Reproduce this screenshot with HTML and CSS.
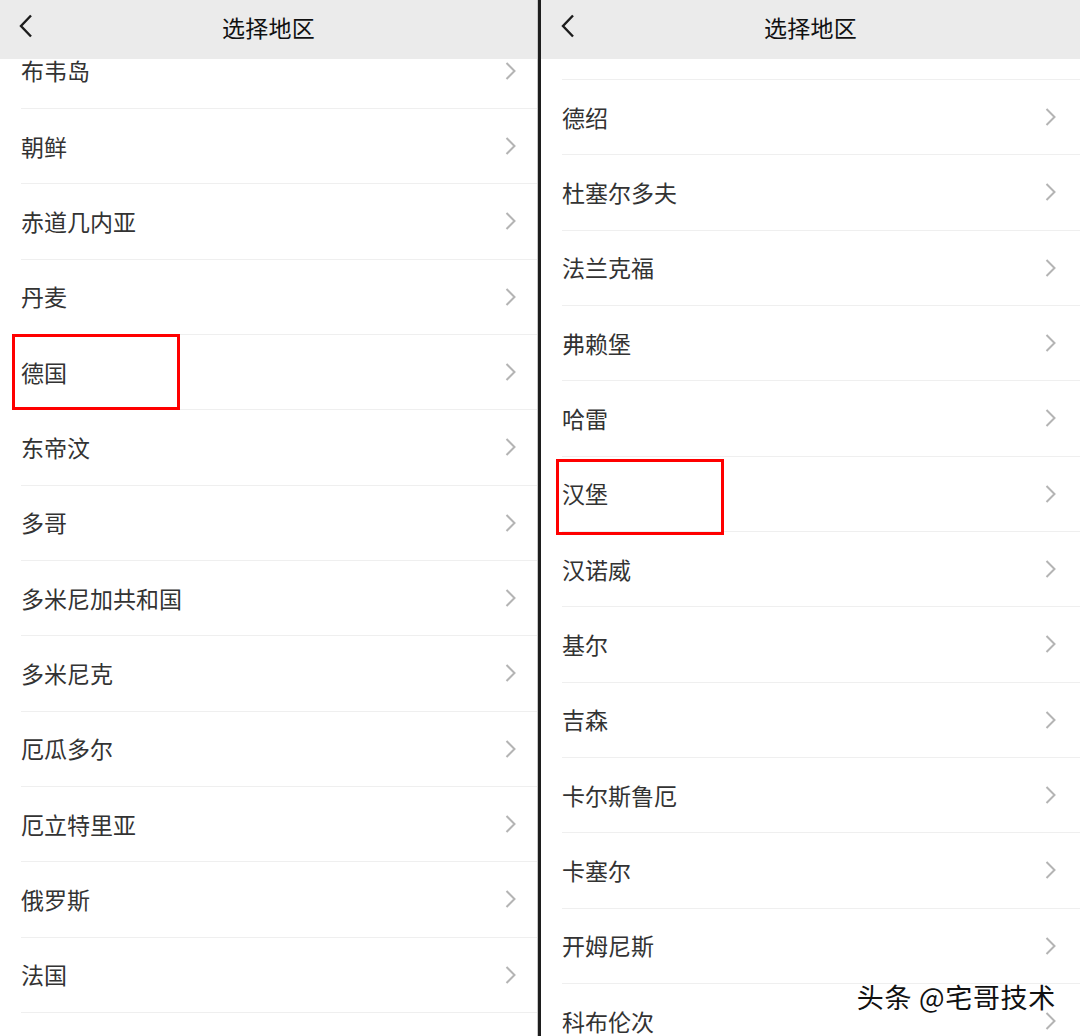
FILE: index.html
```html
<!DOCTYPE html>
<html>
<head>
    <meta charset="utf-8">
    <title>选择地区</title>
    <link rel="stylesheet" href="styles.css">
</head>
<body>
    <div class="screens">
        <div class="panel panel-left">
            <div class="header">
                <svg class="back" width="14" height="24" viewBox="0 0 14 24"><path d="M12 1.5 L2 12 L12 22.5" fill="none" stroke="#1c1c1c" stroke-width="2.4"/></svg>
                <span class="title">选择地区</span>
            </div>
            <div class="scroll">
                <ul class="list list-left">
                    <li class="row"><span>布韦岛</span><svg class="chev" viewBox="0 0 11 18"><path d="M1.5 1 L9.5 9 L1.5 17"/></svg></li>
                    <li class="row"><span>朝鲜</span><svg class="chev" viewBox="0 0 11 18"><path d="M1.5 1 L9.5 9 L1.5 17"/></svg></li>
                    <li class="row"><span>赤道几内亚</span><svg class="chev" viewBox="0 0 11 18"><path d="M1.5 1 L9.5 9 L1.5 17"/></svg></li>
                    <li class="row"><span>丹麦</span><svg class="chev" viewBox="0 0 11 18"><path d="M1.5 1 L9.5 9 L1.5 17"/></svg></li>
                    <li class="row"><span>德国</span><svg class="chev" viewBox="0 0 11 18"><path d="M1.5 1 L9.5 9 L1.5 17"/></svg><b class="mark mark-left"></b></li>
                    <li class="row"><span>东帝汶</span><svg class="chev" viewBox="0 0 11 18"><path d="M1.5 1 L9.5 9 L1.5 17"/></svg></li>
                    <li class="row"><span>多哥</span><svg class="chev" viewBox="0 0 11 18"><path d="M1.5 1 L9.5 9 L1.5 17"/></svg></li>
                    <li class="row"><span>多米尼加共和国</span><svg class="chev" viewBox="0 0 11 18"><path d="M1.5 1 L9.5 9 L1.5 17"/></svg></li>
                    <li class="row"><span>多米尼克</span><svg class="chev" viewBox="0 0 11 18"><path d="M1.5 1 L9.5 9 L1.5 17"/></svg></li>
                    <li class="row"><span>厄瓜多尔</span><svg class="chev" viewBox="0 0 11 18"><path d="M1.5 1 L9.5 9 L1.5 17"/></svg></li>
                    <li class="row"><span>厄立特里亚</span><svg class="chev" viewBox="0 0 11 18"><path d="M1.5 1 L9.5 9 L1.5 17"/></svg></li>
                    <li class="row"><span>俄罗斯</span><svg class="chev" viewBox="0 0 11 18"><path d="M1.5 1 L9.5 9 L1.5 17"/></svg></li>
                    <li class="row"><span>法国</span><svg class="chev" viewBox="0 0 11 18"><path d="M1.5 1 L9.5 9 L1.5 17"/></svg></li>
                </ul>
            </div>
        </div>

        <div class="divider"></div>

        <div class="panel panel-right">
            <div class="header">
                <svg class="back" width="14" height="24" viewBox="0 0 14 24"><path d="M12 1.5 L2 12 L12 22.5" fill="none" stroke="#1c1c1c" stroke-width="2.4"/></svg>
                <span class="title">选择地区</span>
            </div>
            <div class="scroll">
                <ul class="list list-right">
                    <li class="row"><span>德绍</span><svg class="chev" viewBox="0 0 11 18"><path d="M1.5 1 L9.5 9 L1.5 17"/></svg></li>
                    <li class="row"><span>杜塞尔多夫</span><svg class="chev" viewBox="0 0 11 18"><path d="M1.5 1 L9.5 9 L1.5 17"/></svg></li>
                    <li class="row"><span>法兰克福</span><svg class="chev" viewBox="0 0 11 18"><path d="M1.5 1 L9.5 9 L1.5 17"/></svg></li>
                    <li class="row"><span>弗赖堡</span><svg class="chev" viewBox="0 0 11 18"><path d="M1.5 1 L9.5 9 L1.5 17"/></svg></li>
                    <li class="row"><span>哈雷</span><svg class="chev" viewBox="0 0 11 18"><path d="M1.5 1 L9.5 9 L1.5 17"/></svg></li>
                    <li class="row"><span>汉堡</span><svg class="chev" viewBox="0 0 11 18"><path d="M1.5 1 L9.5 9 L1.5 17"/></svg><b class="mark mark-right"></b></li>
                    <li class="row"><span>汉诺威</span><svg class="chev" viewBox="0 0 11 18"><path d="M1.5 1 L9.5 9 L1.5 17"/></svg></li>
                    <li class="row"><span>基尔</span><svg class="chev" viewBox="0 0 11 18"><path d="M1.5 1 L9.5 9 L1.5 17"/></svg></li>
                    <li class="row"><span>吉森</span><svg class="chev" viewBox="0 0 11 18"><path d="M1.5 1 L9.5 9 L1.5 17"/></svg></li>
                    <li class="row"><span>卡尔斯鲁厄</span><svg class="chev" viewBox="0 0 11 18"><path d="M1.5 1 L9.5 9 L1.5 17"/></svg></li>
                    <li class="row"><span>卡塞尔</span><svg class="chev" viewBox="0 0 11 18"><path d="M1.5 1 L9.5 9 L1.5 17"/></svg></li>
                    <li class="row"><span>开姆尼斯</span><svg class="chev" viewBox="0 0 11 18"><path d="M1.5 1 L9.5 9 L1.5 17"/></svg></li>
                    <li class="row"><span>科布伦次</span><svg class="chev" viewBox="0 0 11 18"><path d="M1.5 1 L9.5 9 L1.5 17"/></svg></li>
                </ul>
            </div>
            <div class="watermark">头条 @宅哥技术</div>
        </div>
    </div>
</body>
</html>
```

FILE: styles.css
```css
html, body {
    margin: 0;
    padding: 0;
    height: 100%;
}
body {
    font-family: "Noto Sans CJK SC", "Noto Sans", sans-serif;
    background-color: #fff;
    color: #333;
    overflow: hidden;
}
.screens {
    display: flex;
    height: 1036px;
}
.panel {
    position: relative;
    display: flex;
    flex-direction: column;
    height: 100%;
    overflow: hidden;
    background-color: #fff;
}
.panel-left {
    width: 537px;
    border-right: 1px solid #c8c8c8;
}
.panel-right {
    flex: 1;
}
.divider {
    width: 3px;
    background-color: #1e1e1e;
}
.header {
    position: relative;
    flex: none;
    height: 59px;
    background-color: #ebebeb;
    display: flex;
    align-items: center;
    justify-content: center;
}
.back {
    position: absolute;
    left: 19px;
    top: 14px;
}
.panel-right .back {
    left: 20px;
}
.title {
    font-size: 23px;
    color: #111;
    font-weight: normal;
    letter-spacing: 0.2px;
    margin-top: -5px;
}
.scroll {
    flex: 1;
    overflow: hidden;
}
.list {
    list-style: none;
    margin: 0;
    padding: 0;
}
.list-left {
    margin-top: -25.4px;
}
.list-right {
    margin-top: 20px;
    border-top: 1px solid #efefef;
    margin-left: 21px;
}
.list-left .row {
    margin-left: 21px;
}
.row {
    position: relative;
    display: flex;
    align-items: center;
    justify-content: space-between;
    height: 74.33px;
    border-bottom: 1px solid #efefef;
    padding: 0 21px 0 0;
    font-size: 23px;
    color: #333;
}
.list-right .row {
    padding-right: 24px;
}
.row span {
    margin-top: -1px;
}
.chev {
    display: block;
    width: 11px;
    height: 18px;
    fill: none;
    stroke: #b4b4b4;
    stroke-width: 2;
}
.mark {
    position: absolute;
    border: 3px solid #ff0000;
    width: 162px;
    height: 70px;
}
.mark-left {
    left: -9px;
    top: -1px;
}
.mark-right {
    left: -6px;
    top: 2px;
}
.watermark {
    position: absolute;
    right: 24px;
    bottom: 20px;
    font-size: 27px;
    color: #111;
    text-shadow: 1px 1px 0 #fff, -1px 0 0 #fff, 0 -1px 0 #fff;
    letter-spacing: 0.7px;
}
```
